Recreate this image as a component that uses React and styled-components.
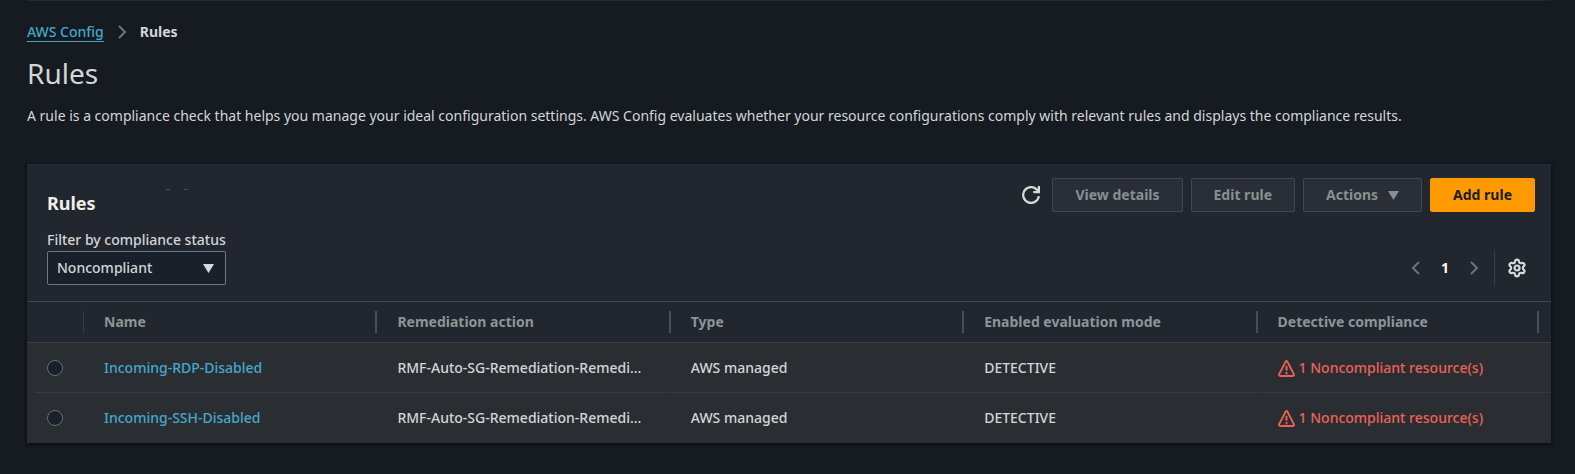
import React, { useState } from "react";
import styled, { createGlobalStyle } from "styled-components";
import { Settings } from "lucide-react";

const GlobalStyle = createGlobalStyle`
  * { box-sizing: border-box; }
  html { background: #161a21; }
  body {
    margin: 0;
    background: #161a21;
    color: #d3d6d6;
    font-family: "Noto Sans", "Open Sans", sans-serif;
    font-size: 14px;
    font-weight: 500;
    line-height: 22px;
  }
  h1, h2, p, ol { margin: 0; padding: 0; }
`;

const Page = styled.main`
  margin: 0 24px 0 27px;
  padding: 20px 0 24px;
  border-top: 1px solid #232831;
`;

const Breadcrumbs = styled.ol`
  display: flex;
  align-items: center;
  gap: 10px;
  list-style: none;
`;

const Crumb = styled.li`
  display: flex;
  align-items: center;
  gap: 10px;
  font-weight: ${(p) => (p.$current ? 700 : "inherit")};
  svg { color: #6d737b; }
`;

const Link = styled.a`
  color: #46a7c9;
  text-decoration: ${(p) => (p.$underlined ? "underline" : "none")};
  text-underline-offset: 4px;
`;

const PageTitle = styled.h1`
  margin-top: 12px;
  font-size: 28px;
  line-height: 36px;
  font-weight: 400;
`;

const Description = styled.p`
  margin-top: 14px;
  font-weight: 400;
`;

const Card = styled.section`
  margin-top: 37px;
  background: #22262e;
  border-top: 1px solid #272c34;
  box-shadow: 0 1px 2px 1px #0d1014;
`;

const CardHeader = styled.header`
  display: flex;
  justify-content: space-between;
  align-items: flex-start;
  padding: 13px 16px 0 20px;
`;

const TitleGroup = styled.div`
  display: flex;
  align-items: flex-start;
  gap: 70px;
  padding-top: 11px;
`;

const CardTitle = styled.h2`
  padding-top: 3px;
  color: #f0eee8;
  font-size: 18px;
  line-height: 22px;
`;

const Marks = styled.span`
  display: flex;
  gap: 14px;
`;

const Mark = styled.i`
  width: 4px;
  height: 1px;
  background: #4b5157;
`;

const ButtonBar = styled.div`
  display: flex;
  align-items: center;
  gap: 8px;
`;

const Button = styled.button`
  display: flex;
  align-items: center;
  gap: 10px;
  height: 34px;
  padding: 0 22px;
  border: 1px solid ${(p) => (p.$primary ? "#ff9900" : "#414750")};
  border-radius: 2px;
  background: ${(p) => (p.$primary ? "#ff9900" : "#2a2e36")};
  color: ${(p) => (p.$primary ? "#1b1c20" : "#879090")};
  font: inherit;
  font-weight: 700;
`;

const IconButton = styled.button`
  display: flex;
  padding: 4px;
  border: 0;
  background: none;
  color: ${(p) => (p.$dim ? "#6d737b" : "#d5dbdb")};
`;

const FilterBar = styled.div`
  display: flex;
  justify-content: space-between;
  align-items: flex-end;
  padding: 15px 20px 16px 20px;
`;

const Field = styled.label`
  display: flex;
  flex-direction: column;
`;

const SelectBox = styled.span`
  display: grid;
  align-items: center;
  svg {
    grid-area: 1 / 1;
    justify-self: end;
    margin-right: 12px;
    color: #d5dbdb;
    pointer-events: none;
  }
`;

const Select = styled.select`
  grid-area: 1 / 1;
  width: 100%;
  height: 34px;
  padding: 0 32px 0 9px;
  appearance: none;
  border: 1px solid #73787f;
  border-radius: 2px;
  background: #1a2029;
  color: #d3d6d6;
  font: inherit;
`;

const Pager = styled.nav`
  display: flex;
  align-items: center;
  height: 34px;
`;

const PageNumber = styled.button`
  padding: 0 13px;
  border: 0;
  background: none;
  color: #ffffff;
  font: inherit;
  font-weight: 700;
`;

const Divider = styled.span`
  align-self: stretch;
  width: 1px;
  margin: 0 8px;
  background: #3a4049;
`;

const Table = styled.table`
  width: 100%;
  table-layout: fixed;
  border-collapse: separate;
  border-spacing: 0;
`;

const HeadCell = styled.th`
  width: ${(p) => (p.$narrow ? "57px" : "auto")};
  height: 42px;
  padding: 9px 0;
  border-top: 1px solid #40464f;
  border-bottom: 1px solid #3a3f47;
  color: #8b9696;
  text-align: left;
  &:last-child { padding-right: 12px; }
`;

const HeadLabel = styled.span`
  display: block;
  height: 22px;
  padding-left: 20px;
  border-right: ${(p) => (p.$faint ? "1px solid #363c44" : "2px solid #484e56")};
`;

const Row = styled.tr`
  background: #2a2e33;
`;

const Cell = styled.td`
  height: 50px;
  padding: 0 20px;
  white-space: nowrap;
  background: linear-gradient(#363b42, #363b42) no-repeat bottom right;
  background-size: ${(p) => (p.$last ? "0 0" : "100% 1px")};
  &:first-child {
    padding-right: 0;
    background-size: ${(p) => (p.$last ? "0 0" : "calc(100% - 8px) 1px")};
  }
`;

const Radio = styled.input`
  display: block;
  appearance: none;
  width: 16px;
  height: 16px;
  margin: 0;
  border: 1px solid #686e75;
  border-radius: 50%;
  background: #1a2029;
  &:checked { border: 5px solid #46a7c9; }
`;

const Status = styled.span`
  display: flex;
  align-items: center;
  gap: 4px;
  color: #ee6156;
`;

const Chevron = ({ left }) => (
  <svg width="16" height="16" viewBox="0 0 16 16" fill="none" stroke="currentColor" strokeWidth="2" aria-hidden="true">
    <path d={left ? "M11 2 5 8l6 6" : "M5 2l6 6-6 6"} />
  </svg>
);

const Caret = () => (
  <svg width="11" height="9" viewBox="0 0 11 9" fill="currentColor" aria-hidden="true">
    <path d="M0 0h11L5.5 9z" />
  </svg>
);

const RefreshIcon = () => (
  <svg width="18" height="18" viewBox="0 0 16 16" fill="none" stroke="currentColor" strokeWidth="2" aria-hidden="true">
    <path d="M15 9a7 7 0 1 1-2-6l2 2" />
    <path d="M10 5.500h5V0" />
  </svg>
);

const WarningIcon = () => (
  <svg width="17" height="17" viewBox="0 0 16 16" fill="none" stroke="currentColor" strokeWidth="1.800" strokeLinejoin="round" aria-hidden="true">
    <path d="M7.200 1.500Q8 .500 8.800 1.500L15 13.500Q15.200 15 14 15H2Q.800 15 1 13.500z" />
    <path d="M8 5.500v4.500M8 11.300v2" />
  </svg>
);

const COLUMNS = ["Name", "Remediation action", "Type", "Enabled evaluation mode", "Detective compliance"];

const RULES = ["Incoming-RDP-Disabled", "Incoming-SSH-Disabled"].map((name) => ({
  name,
  action: "RMF-Auto-SG-Remediation-Remedi...",
  type: "AWS managed",
  mode: "DETECTIVE",
  compliance: "1 Noncompliant resource(s)",
}));

export default function App() {
  const [selected, setSelected] = useState(null);
  return (
    <>
      <GlobalStyle />
      <Page>
        <nav aria-label="Breadcrumbs">
          <Breadcrumbs>
            <Crumb>
              <Link href="#config" $underlined>AWS Config</Link>
              <Chevron />
            </Crumb>
            <Crumb $current aria-current="page">Rules</Crumb>
          </Breadcrumbs>
        </nav>
        <PageTitle>Rules</PageTitle>
        <Description>
          A rule is a compliance check that helps you manage your ideal configuration settings. AWS Config evaluates
          whether your resource configurations comply with relevant rules and displays the compliance results.
        </Description>
        <Card>
          <CardHeader>
            <TitleGroup>
              <CardTitle>Rules</CardTitle>
              <Marks aria-hidden="true"><Mark /><Mark /></Marks>
            </TitleGroup>
            <ButtonBar>
              <IconButton type="button" aria-label="Refresh"><RefreshIcon /></IconButton>
              <Button type="button">View details</Button>
              <Button type="button">Edit rule</Button>
              <Button type="button">Actions <Caret /></Button>
              <Button type="button" $primary>Add rule</Button>
            </ButtonBar>
          </CardHeader>
          <FilterBar>
            <Field>
              Filter by compliance status
              <SelectBox>
                <Select defaultValue="Noncompliant">
                  <option>Noncompliant</option>
                  <option>Compliant</option>
                </Select>
                <Caret />
              </SelectBox>
            </Field>
            <Pager aria-label="Pagination">
              <IconButton type="button" $dim aria-label="Previous page"><Chevron left /></IconButton>
              <PageNumber type="button">1</PageNumber>
              <IconButton type="button" $dim aria-label="Next page"><Chevron /></IconButton>
              <Divider />
              <IconButton type="button" aria-label="Preferences"><Settings size={20} strokeWidth={2.6} /></IconButton>
            </Pager>
          </FilterBar>
          <Table>
            <thead>
              <tr>
                <HeadCell $narrow><HeadLabel $faint /></HeadCell>
                {COLUMNS.map((c) => (
                  <HeadCell key={c} scope="col"><HeadLabel>{c}</HeadLabel></HeadCell>
                ))}
              </tr>
            </thead>
            <tbody>
              {RULES.map((r, i) => {
                const last = i === RULES.length - 1;
                return (
                  <Row key={r.name}>
                    <Cell $last={last}>
                      <Radio type="radio" name="rule" aria-label={r.name} checked={selected === i} onChange={() => setSelected(i)} />
                    </Cell>
                    <Cell $last={last}><Link href="#rule">{r.name}</Link></Cell>
                    <Cell $last={last}>{r.action}</Cell>
                    <Cell $last={last}>{r.type}</Cell>
                    <Cell $last={last}>{r.mode}</Cell>
                    <Cell $last={last}><Status><WarningIcon />{r.compliance}</Status></Cell>
                  </Row>
                );
              })}
            </tbody>
          </Table>
        </Card>
      </Page>
    </>
  );
}
